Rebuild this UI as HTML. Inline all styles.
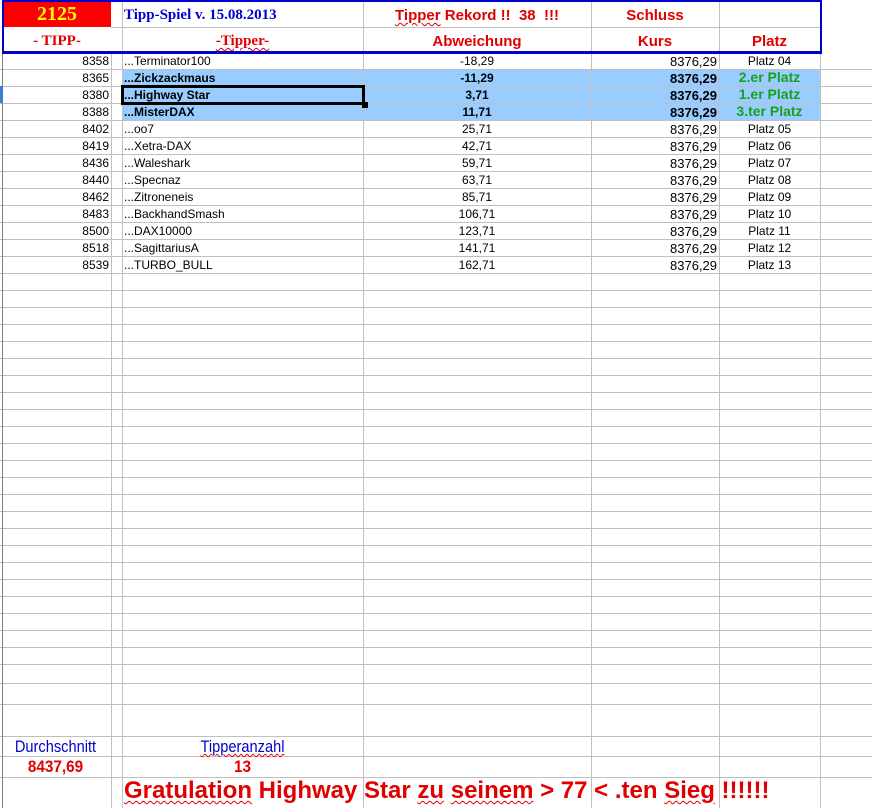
<!DOCTYPE html>
<html><head><meta charset="utf-8"><style>
body{margin:0;width:872px;height:808px;overflow:hidden;background:#fff;position:relative;font-family:"Liberation Sans",Arial,sans-serif;}
div{position:absolute;box-sizing:border-box;}
.v{top:0;height:808px;width:1px;background:#c0c0c0;}
.h{left:0;width:872px;height:1px;background:#c0c0c0;}
.r{height:17px;line-height:17px;font-size:12px;white-space:nowrap;color:#000;}
.a{left:0;width:109px;text-align:right;}
.n{left:124px;}
.d{left:363px;width:228px;text-align:center;}
.k{left:591px;width:126px;text-align:right;font-size:13px;}
.p{left:719px;width:101px;text-align:center;}
.b{font-weight:bold;}
.g{color:#1a9f1a;font-weight:bold;font-size:14px;}
.wv{text-decoration:underline wavy #e00000;text-decoration-thickness:1px;text-underline-offset:2px;}
</style></head><body>
<div style="left:122px;top:69px;width:698px;height:52px;background:#99ccff;"></div>
<div style="left:0;top:53px;width:872px;height:612px;background:repeating-linear-gradient(to bottom,transparent 0,transparent 16px,#c0c0c0 16px,#c0c0c0 17px);"></div>
<div class="h" style="top:683px"></div>
<div class="h" style="top:704px"></div>
<div class="h" style="top:736px"></div>
<div class="h" style="top:756px"></div>
<div class="h" style="top:777px"></div>
<div class="v" style="left:111px"></div>
<div class="v" style="left:122px"></div>
<div class="v" style="left:363px"></div>
<div class="v" style="left:591px"></div>
<div class="v" style="left:719px"></div>
<div class="v" style="left:820px"></div>
<div style="left:2px;top:0;width:1px;height:808px;background:#808080"></div>
<div style="left:0;top:0;width:872px;height:53px;background:#fff"></div>
<div style="left:3px;top:2px;width:108px;height:25px;background:#ff0000"></div>
<div class="h" style="top:27px;left:111px;width:709px"></div>
<div style="left:122px;top:2px;width:1px;height:50px;background:#c0c0c0"></div>
<div style="left:363px;top:2px;width:1px;height:50px;background:#c0c0c0"></div>
<div style="left:591px;top:2px;width:1px;height:50px;background:#c0c0c0"></div>
<div style="left:719px;top:2px;width:1px;height:50px;background:#c0c0c0"></div>
<div style="left:2px;top:0;width:820px;height:54px;border:2px solid #0000cc;border-bottom-width:3px"></div>
<div style="left:3px;top:3px;width:108px;text-align:center;font:bold 20px 'Liberation Serif',serif;color:#ffff00">2125</div>
<div style="left:124px;top:7px;font:bold 15px 'Liberation Serif',serif;color:#0000cc">Tipp-Spiel v. 15.08.2013</div>
<div style="left:363px;top:7px;width:228px;text-align:center;font-weight:bold;font-size:15px;color:#e00000;white-space:pre"><span class="wv">Tipper</span> Rekord !!  38  !!!</div>
<div style="left:591px;top:7px;width:128px;text-align:center;font-weight:bold;font-size:15px;color:#e00000">Schluss</div>
<div style="left:3px;top:33px;width:108px;text-align:center;font:bold 15px 'Liberation Serif',serif;color:#e00000">- TIPP-</div>
<div style="left:122px;top:33px;width:241px;text-align:center;font:bold 15px 'Liberation Serif',serif;color:#e00000"><span class="wv">-Tipper-</span></div>
<div style="left:363px;top:33px;width:228px;text-align:center;font-weight:bold;font-size:15px;color:#e00000">Abweichung</div>
<div style="left:591px;top:33px;width:128px;text-align:center;font-weight:bold;font-size:15px;color:#e00000">Kurs</div>
<div style="left:719px;top:33px;width:101px;text-align:center;font-weight:bold;font-size:15px;color:#e00000">Platz</div>
<div class="r a" style="top:53px">8358</div><div class="r n" style="top:53px">...Terminator100</div><div class="r d" style="top:53px">-18,29</div><div class="r k" style="top:53px">8376,29</div><div class="r p" style="top:53px">Platz 04</div>
<div class="r a" style="top:70px">8365</div><div class="r n b" style="top:70px">...Zickzackmaus</div><div class="r d b" style="top:70px">-11,29</div><div class="r k b" style="top:70px">8376,29</div><div class="r p g" style="top:69px">2.er Platz</div>
<div class="r a" style="top:87px">8380</div><div class="r n b" style="top:87px">...Highway Star</div><div class="r d b" style="top:87px">3,71</div><div class="r k b" style="top:87px">8376,29</div><div class="r p g" style="top:86px">1.er Platz</div>
<div class="r a" style="top:104px">8388</div><div class="r n b" style="top:104px">...MisterDAX</div><div class="r d b" style="top:104px">11,71</div><div class="r k b" style="top:104px">8376,29</div><div class="r p g" style="top:103px">3.ter Platz</div>
<div class="r a" style="top:121px">8402</div><div class="r n" style="top:121px">...oo7</div><div class="r d" style="top:121px">25,71</div><div class="r k" style="top:121px">8376,29</div><div class="r p" style="top:121px">Platz 05</div>
<div class="r a" style="top:138px">8419</div><div class="r n" style="top:138px">...Xetra-DAX</div><div class="r d" style="top:138px">42,71</div><div class="r k" style="top:138px">8376,29</div><div class="r p" style="top:138px">Platz 06</div>
<div class="r a" style="top:155px">8436</div><div class="r n" style="top:155px">...Waleshark</div><div class="r d" style="top:155px">59,71</div><div class="r k" style="top:155px">8376,29</div><div class="r p" style="top:155px">Platz 07</div>
<div class="r a" style="top:172px">8440</div><div class="r n" style="top:172px">...Specnaz</div><div class="r d" style="top:172px">63,71</div><div class="r k" style="top:172px">8376,29</div><div class="r p" style="top:172px">Platz 08</div>
<div class="r a" style="top:189px">8462</div><div class="r n" style="top:189px">...Zitroneneis</div><div class="r d" style="top:189px">85,71</div><div class="r k" style="top:189px">8376,29</div><div class="r p" style="top:189px">Platz 09</div>
<div class="r a" style="top:206px">8483</div><div class="r n" style="top:206px">...BackhandSmash</div><div class="r d" style="top:206px">106,71</div><div class="r k" style="top:206px">8376,29</div><div class="r p" style="top:206px">Platz 10</div>
<div class="r a" style="top:223px">8500</div><div class="r n" style="top:223px">...DAX10000</div><div class="r d" style="top:223px">123,71</div><div class="r k" style="top:223px">8376,29</div><div class="r p" style="top:223px">Platz 11</div>
<div class="r a" style="top:240px">8518</div><div class="r n" style="top:240px">...SagittariusA</div><div class="r d" style="top:240px">141,71</div><div class="r k" style="top:240px">8376,29</div><div class="r p" style="top:240px">Platz 12</div>
<div class="r a" style="top:257px">8539</div><div class="r n" style="top:257px">...TURBO_BULL</div><div class="r d" style="top:257px">162,71</div><div class="r k" style="top:257px">8376,29</div><div class="r p" style="top:257px">Platz 13</div>
<div style="left:121px;top:85px;width:244px;height:20px;border:3px solid #000"></div>
<div style="left:362px;top:102px;width:6px;height:6px;background:#000"></div>
<div style="left:0;top:86px;width:3px;height:17px;background:#3a7fd5"></div>
<div style="left:0;top:737px;width:111px;text-align:center;font-size:17px;color:#0000cc;transform:scaleX(0.86)">Durchschnitt</div>
<div style="left:122px;top:737px;width:241px;text-align:center;font-size:17px;color:#0000cc;transform:scaleX(0.86)"><span style="text-decoration:underline wavy #e00000;text-decoration-thickness:1px">Tipperanzahl</span></div>
<div style="left:0;top:757px;width:111px;text-align:center;font-size:17px;font-weight:bold;color:#e00000;transform:scaleX(0.9)">8437,69</div>
<div style="left:122px;top:757px;width:241px;text-align:center;font-size:17px;font-weight:bold;color:#e00000;transform:scaleX(0.9)">13</div>
<div style="left:124px;top:777px;font-size:24px;font-weight:bold;color:#e00000;white-space:nowrap"><span class="wv">Gratulation</span> Highway Star <span class="wv">zu</span> <span class="wv">seinem</span> &gt; 77 &lt; .ten <span class="wv">Sieg</span> !!!!!!</div>
</body></html>
